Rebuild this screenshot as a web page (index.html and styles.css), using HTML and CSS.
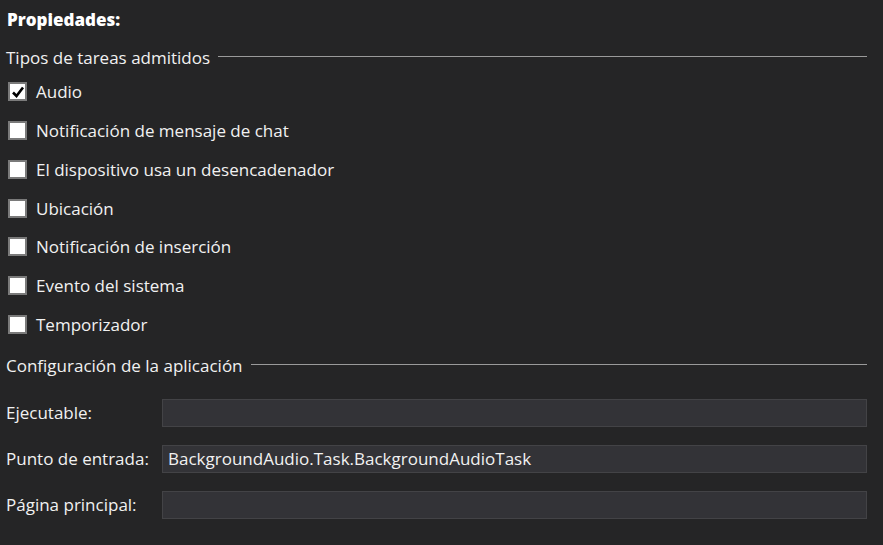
FILE: index.html
```html
<!DOCTYPE html>
<html lang="es">
<head>
<meta charset="utf-8">
<link rel="stylesheet" href="styles.css">
</head>
<body>
<div class="page">
  <div class="title">Propiedades:</div>
  <div class="group-head"><span>Tipos de tareas admitidos</span><div class="rule"></div></div>
  <div class="checks">
    <label class="check"><span class="box checked"><svg width="14" height="14" viewBox="0 0 14 14"><path d="M2 7.5 L5.5 11 L12 2.5" fill="none" stroke="#000" stroke-width="2.6"/></svg></span>Audio</label>
    <label class="check"><span class="box"></span>Notificación de mensaje de chat</label>
    <label class="check"><span class="box"></span>El dispositivo usa un desencadenador</label>
    <label class="check"><span class="box"></span>Ubicación</label>
    <label class="check"><span class="box"></span>Notificación de inserción</label>
    <label class="check"><span class="box"></span>Evento del sistema</label>
    <label class="check"><span class="box"></span>Temporizador</label>
  </div>
  <div class="group-head second"><span>Configuración de la aplicación</span><div class="rule"></div></div>
  <div class="form">
    <div class="lbl">Ejecutable:</div><div class="input"></div>
    <div class="lbl">Punto de entrada:</div><div class="input">BackgroundAudio.Task.BackgroundAudioTask</div>
    <div class="lbl">Página principal:</div><div class="input"></div>
  </div>
</div>
</body>
</html>
```
FILE: styles.css
```css
html, body {
  margin: 0;
  padding: 0;
  background: #252526;
  color: #f1f1f1;
  font-family: "Open Sans", "Noto Sans", sans-serif;
  font-size: 17px;
}
.page {
  width: 883px;
  height: 545px;
  padding: 8px 16px 0 6px;
  box-sizing: border-box;
  display: flex;
  flex-direction: column;
}
.title {
  font-weight: 800;
  font-size: 17px;
  line-height: 24px;
  padding-left: 1px;
  height: 40px;
  color: #ffffff;
}
.group-head {
  display: flex;
  align-items: center;
  height: 20px;
  line-height: 20px;
}
.group-head span {
  white-space: nowrap;
  margin-right: 8px;
}
.rule {
  flex: 1;
  height: 1px;
  background: #9a9a9a;
  margin-top: -4px;
}
.checks {
  display: flex;
  flex-direction: column;
  padding-top: 4.6px;
}
.check {
  display: flex;
  align-items: center;
  height: 38.7px;
  padding-left: 2px;
}
.box {
  width: 19px;
  height: 19px;
  box-sizing: border-box;
  border: 2px solid #7a7a7a;
  background: #ffffff;
  margin-right: 9px;
  display: flex;
  align-items: center;
  justify-content: center;
}
.second {
  margin-top: 12.6px;
}
.form {
  display: grid;
  grid-template-columns: 156px 1fr;
  row-gap: 18px;
  margin-top: 23px;
  align-items: center;
}
.lbl {
  line-height: 28px;
}
.input {
  height: 28px;
  box-sizing: border-box;
  background: #333337;
  border: 1px solid #434346;
  line-height: 26px;
  padding-left: 5px;
  color: #f1f1f1;
}
```
